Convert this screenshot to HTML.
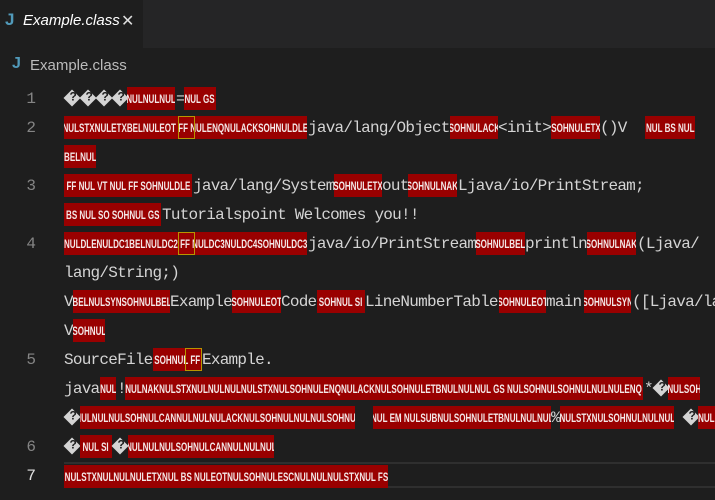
<!DOCTYPE html>
<html><head><meta charset="utf-8"><style>
body{margin:0;width:715px;height:500px;background:#1e1e1e;overflow:hidden;position:relative;font-family:"Liberation Sans",sans-serif}
.tabbar{position:absolute;left:0;top:0;width:715px;height:48px;background:#252526}
.tab{position:absolute;left:0;top:0;width:143px;height:48px;background:#1e1e1e}
.a{position:absolute;white-space:nowrap}
.r{position:absolute;background:#990000;color:#f4e8e8;font:bold 12px "Liberation Sans",sans-serif;height:23px;line-height:24px;overflow:hidden;white-space:nowrap;display:flex;justify-content:center;transform:translateY(-11px)}
.r span{flex-shrink:0;display:inline-block;transform:scaleX(0.67);transform-origin:center}
.t{position:absolute;color:#d4d4d4;font:16px "Liberation Mono",monospace;letter-spacing:-0.75px;white-space:nowrap;transform:translateY(-9px);line-height:20px}
.ln{position:absolute;color:#858585;font:16px "Liberation Mono",monospace;width:36px;text-align:right;left:0;transform:translateY(-9px);line-height:20px}
.d{position:absolute;width:12px;height:12px;background:#d4d4d4;transform:translateY(-6px) rotate(45deg);}
.d::after{content:"?";position:absolute;left:2px;top:-3px;transform:rotate(-45deg);font:bold 12px "Liberation Sans";color:#1e1e1e}
.y{position:absolute;border:1px solid #b89500;height:21px;transform:translateY(-11px)}
</style></head><body>
<div class="tabbar"><div class="tab"></div></div>
<div class="a" style="left:5px;top:10px;color:#519aba;font:bold 17px 'Liberation Sans'">J</div>
<div class="a" style="left:23px;top:12px;color:#fff;font:italic 15px 'Liberation Sans'">Example.class</div>
<div class="a" style="left:121px;top:11px;color:#ddd;font:16px 'Liberation Sans'">✕</div>
<div class="a" style="left:12px;top:55px;color:#519aba;font:bold 16px 'Liberation Sans'">J</div>
<div class="a" style="left:30px;top:57px;color:#bbb;font:15px 'Liberation Sans'">Example.class</div>

<div class="ln" style="top:98px">1</div>
<div class="ln" style="top:127px">2</div>
<div class="ln" style="top:185px">3</div>
<div class="ln" style="top:243px">4</div>
<div class="ln" style="top:359px">5</div>
<div class="ln" style="top:446px">6</div>
<div class="ln" style="top:475px;color:#e0e0e0">7</div>

<!-- line 1 -->
<div class="d" style="left:66px;top:98px"></div><div class="d" style="left:82px;top:98px"></div><div class="d" style="left:98px;top:98px"></div><div class="d" style="left:114px;top:98px"></div>
<div class="r" style="left:127px;width:48px;top:98px"><span>NULNULNUL</span></div>
<div class="t" style="left:176px;top:98px">=</div>
<div class="r" style="left:184px;width:32px;top:98px"><span>NUL GS</span></div>
<!-- line 2 -->
<div class="r" style="left:64px;width:243px;top:127px"><span>NULSTXNULETXBELNULEOT FF NULENQNULACKSOHNULDLE</span></div>
<div class="y" style="left:178px;width:15px;top:127px"></div>
<div class="t" style="left:308px;top:127px">java/lang/Object</div>
<div class="r" style="left:450px;width:48px;top:127px"><span>SOHNULACK</span></div>
<div class="t" style="left:498px;top:127px">&lt;init&gt;</div>
<div class="r" style="left:551px;width:49px;top:127px"><span>SOHNULETX</span></div>
<div class="t" style="left:600px;top:127px">()V</div>
<div class="r" style="left:645px;width:50px;top:127px"><span>NUL BS NUL</span></div>
<div class="r" style="left:64px;width:32px;top:156px"><span>BELNUL</span></div>
<!-- line 3 -->
<div class="r" style="left:64px;width:128px;top:185px"><span>FF NUL VT NUL FF SOHNULDLE</span></div>
<div class="t" style="left:193px;top:185px">java/lang/System</div>
<div class="r" style="left:334px;width:48px;top:185px"><span>SOHNULETX</span></div>
<div class="t" style="left:382px;top:185px">out</div>
<div class="r" style="left:408px;width:49px;top:185px"><span>SOHNULNAK</span></div>
<div class="t" style="left:458px;top:185px">Ljava/io/PrintStream;</div>
<div class="r" style="left:64px;width:97px;top:214px"><span>BS NUL SO SOHNUL GS</span></div>
<div class="t" style="left:162px;top:214px">Tutorialspoint Welcomes you!!</div>
<!-- line 4 -->
<div class="r" style="left:64px;width:243px;top:243px"><span>NULDLENULDC1BELNULDC2 FF NULDC3NULDC4SOHNULDC3</span></div>
<div class="y" style="left:178px;width:15px;top:243px"></div>
<div class="t" style="left:308px;top:243px">java/io/PrintStream</div>
<div class="r" style="left:476px;width:49px;top:243px"><span>SOHNULBEL</span></div>
<div class="t" style="left:525px;top:243px">println</div>
<div class="r" style="left:587px;width:49px;top:243px"><span>SOHNULNAK</span></div>
<div class="t" style="left:637px;top:243px">(Ljava/</div>
<div class="t" style="left:64px;top:272px">lang/String;)</div>
<div class="t" style="left:64px;top:301px">V</div>
<div class="r" style="left:73px;width:97px;top:301px"><span>BELNULSYNSOHNULBEL</span></div>
<div class="t" style="left:170px;top:301px">Example</div>
<div class="r" style="left:232px;width:49px;top:301px"><span>SOHNULEOT</span></div>
<div class="t" style="left:281px;top:301px">Code</div>
<div class="r" style="left:317px;width:48px;top:301px"><span>SOHNUL SI</span></div>
<div class="t" style="left:365px;top:301px">LineNumberTable</div>
<div class="r" style="left:499px;width:47px;top:301px"><span>SOHNULEOT</span></div>
<div class="t" style="left:546px;top:301px">main</div>
<div class="r" style="left:584px;width:47px;top:301px"><span>SOHNULSYN</span></div>
<div class="t" style="left:632px;top:301px">([Ljava/la</div>
<div class="t" style="left:64px;top:330px">V</div>
<div class="r" style="left:73px;width:32px;top:330px"><span>SOHNUL</span></div>
<!-- line 5 -->
<div class="t" style="left:64px;top:359px">SourceFile</div>
<div class="r" style="left:153px;width:48px;top:359px"><span>SOHNUL FF</span></div>
<div class="y" style="left:185px;width:15px;top:359px"></div>
<div class="t" style="left:202px;top:359px">Example.</div>
<div class="t" style="left:64px;top:388px">java</div>
<div class="r" style="left:100px;width:16px;top:388px"><span>NUL</span></div>
<div class="t" style="left:117px;top:388px">!</div>
<div class="r" style="left:125px;width:518px;top:388px"><span>NULNAKNULSTXNULNULNULNULSTXNULSOHNULENQNULACKNULSOHNULETBNULNULNUL GS NULSOHNULSOHNULNULNULENQ</span></div>
<div class="t" style="left:644px;top:388px">*</div>
<div class="d" style="left:655px;top:388px"></div>
<div class="r" style="left:668px;width:32px;top:388px"><span>NULSOH</span></div>
<div class="d" style="left:66px;top:417px"></div>
<div class="r" style="left:80px;width:275px;top:417px"><span>NULNULNULSOHNULCANNULNULNULACKNULSOHNULNULNULSOHNUL</span></div>
<div class="r" style="left:373px;width:178px;top:417px"><span>NUL EM NULSUBNULSOHNULETBNULNULNUL</span></div>
<div class="t" style="left:551px;top:417px">%</div>
<div class="r" style="left:560px;width:114px;top:417px"><span>NULSTXNULSOHNULNULNUL</span></div>
<div class="d" style="left:685px;top:417px"></div>
<div class="r" style="left:698px;width:17px;top:417px"><span>NUL</span></div>
<!-- line 6 -->
<div class="d" style="left:66px;top:446px"></div>
<div class="r" style="left:80px;width:32px;top:446px"><span>NUL SI</span></div>
<div class="d" style="left:114px;top:446px"></div>
<div class="r" style="left:128px;width:146px;top:446px"><span>NULNULNULSOHNULCANNULNULNUL</span></div>
<!-- line 7 -->
<div class="a" style="left:64px;top:462px;width:651px;height:26px;border-top:2px solid #2f2f2f;border-bottom:2px solid #2f2f2f;box-sizing:border-box"></div>
<div class="r" style="left:64px;width:324px;top:476px"><span>NULSTXNULNULNULETXNUL BS NULEOTNULSOHNULESCNULNULNULSTXNUL FS</span></div>
</body></html>
